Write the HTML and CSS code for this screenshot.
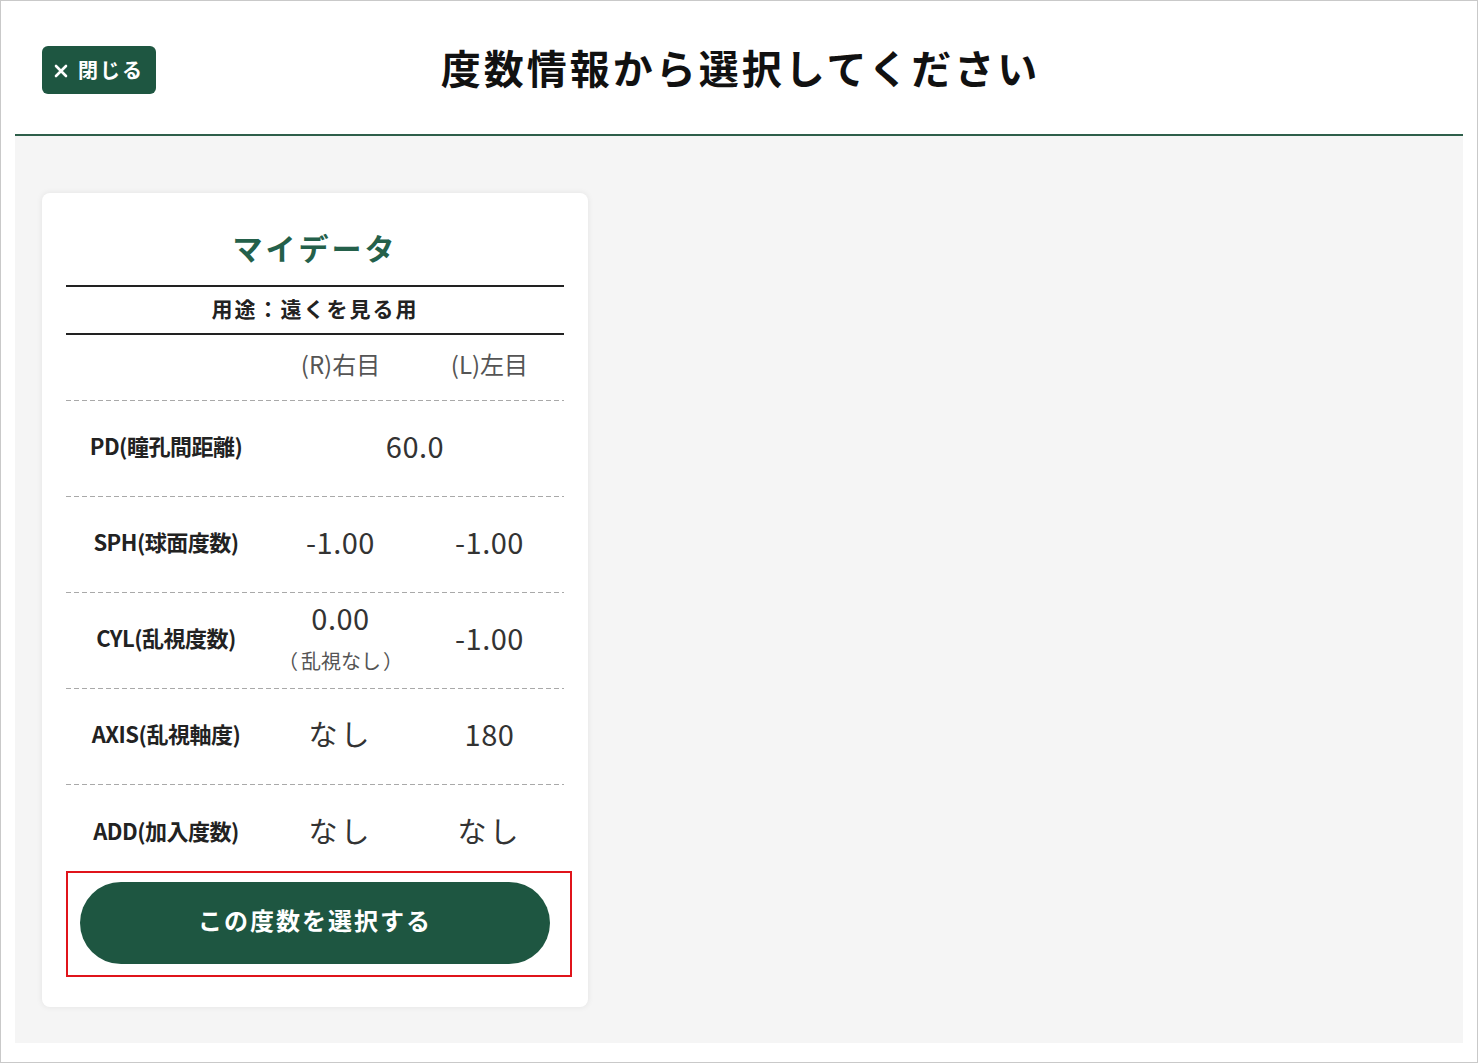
FILE: index.html
```html
<!DOCTYPE html>
<html lang="ja">
<head>
<meta charset="utf-8">
<title>度数情報から選択してください</title>
<link rel="stylesheet" href="styles.css">
</head>
<body>
<div class="frame">
  <header class="header">
    <button class="close-btn" type="button">
      <svg class="close-icon" width="14" height="14" viewBox="0 0 14 14"><path d="M2 2 L12 12 M12 2 L2 12" stroke="#fff" stroke-width="2.6" stroke-linecap="round" fill="none"/></svg>
      <span>閉じる</span>
    </button>
    <h1 class="title">度数情報から選択してください</h1>
    <div class="spacer"></div>
  </header>
  <main class="main">
    <section class="card">
      <h2 class="card-title">マイデータ</h2>
      <div class="purpose">用途：遠くを見る用</div>
      <div class="table">
        <div class="row head">
          <div class="cell label"></div>
          <div class="cell eye">(R)右目</div>
          <div class="cell eye">(L)左目</div>
        </div>
        <div class="row">
          <div class="cell label">PD(瞳孔間距離)</div>
          <div class="cell value span2">60.0</div>
        </div>
        <div class="row">
          <div class="cell label">SPH(球面度数)</div>
          <div class="cell value">-1.00</div>
          <div class="cell value">-1.00</div>
        </div>
        <div class="row">
          <div class="cell label">CYL(乱視度数)</div>
          <div class="cell value stack"><span>0.00</span><span class="note"><span class="po">（</span>乱視なし<span class="pc">）</span></span></div>
          <div class="cell value">-1.00</div>
        </div>
        <div class="row">
          <div class="cell label">AXIS(乱視軸度)</div>
          <div class="cell value jp">なし</div>
          <div class="cell value">180</div>
        </div>
        <div class="row last">
          <div class="cell label">ADD(加入度数)</div>
          <div class="cell value jp">なし</div>
          <div class="cell value jp">なし</div>
        </div>
      </div>
      <div class="select-wrap">
        <button class="select-btn" type="button">この度数を選択する</button>
      </div>
    </section>
  </main>
</div>
</body>
</html>
```
FILE: styles.css
```css
* { box-sizing: border-box; }
html, body { margin: 0; padding: 0; background: #fff; }
body {
  font-family: "Noto Sans CJK JP", "Noto Sans", sans-serif;
  color: #222;
}
.frame {
  width: 1478px;
  height: 1063px;
  border: 1px solid #c9c9c9;
  padding: 0 14px 19px;
  background: #fff;
  display: flex;
  flex-direction: column;
}
.header {
  flex: none;
  height: 135px;
  border-bottom: 2px solid #2e5f4a;
  display: grid;
  grid-template-columns: 1fr auto 1fr;
  align-items: center;
  padding-top: 5px;
}
.close-btn {
  justify-self: start;
  margin-left: 27px;
  width: 114px;
  height: 48px;
  border: none;
  border-radius: 6px;
  background: #1e5641;
  color: #fff;
  font-family: inherit;
  font-size: 20px;
  font-weight: 700;
  letter-spacing: 2px;
  display: flex;
  align-items: center;
  padding: 0 0 0 12px;
  gap: 10px;
  line-height: 1;
}
.close-icon { flex: none; margin-top: 2px; }
.title {
  margin: -6px -3px 0 0;
  font-size: 40px;
  font-weight: 700;
  letter-spacing: 3px;
  line-height: 1.2;
  color: #111;
}
.main {
  flex: 1;
  min-height: 0;
  background: #f5f5f5;
  padding: 57px 27px;
}
.card {
  width: 546px;
  background: #fff;
  border-radius: 8px;
  box-shadow: 0 0 6px rgba(0,0,0,0.08);
  padding: 34px 24px 43px;
}
.card-title {
  margin: 0 0 18px;
  text-align: center;
  font-size: 30px;
  line-height: 40px;
  font-weight: 700;
  letter-spacing: 3px;
  color: #24604a;
}
.purpose {
  border-top: 2px solid #222;
  border-bottom: 2px solid #222;
  height: 50px;
  display: flex;
  align-items: center;
  justify-content: center;
  font-size: 21px;
  font-weight: 700;
  letter-spacing: 2px;
  color: #222;
  padding-bottom: 4px;
}
.row {
  display: grid;
  grid-template-columns: 200px 1fr 1fr;
  height: 96px;
  background-image: repeating-linear-gradient(to right, #a9a9a9 0 5px, transparent 5px 8px);
  background-size: 100% 1px;
  background-position: left bottom;
  background-repeat: no-repeat;
  padding-bottom: 9px;
}
.row.head { height: 66px; padding-bottom: 10px; }
.row.last { height: 95px; background-image: none; padding-bottom: 6px; }
.cell {
  display: flex;
  align-items: center;
  justify-content: center;
}
.label {
  font-size: 22px;
  font-weight: 700;
  letter-spacing: -0.5px;
  color: #222;
}
.eye {
  font-size: 24px;
  color: #555;
}
.value {
  font-size: 29px;
  color: #333;
  letter-spacing: 0.5px;
}
.value.jp { letter-spacing: 3px; }
.span2 { grid-column: 2 / 4; }
.stack {
  flex-direction: column;
  line-height: 1.15;
}
.note {
  font-size: 20px;
  color: #555;
  margin-top: 14px;
  letter-spacing: 0;
}
.po { margin-right: 3px; }
.pc { margin-left: 2px; }
.select-wrap {
  position: relative;
  margin-top: 2px;
  padding-left: 14px;
}
.select-wrap::after {
  content: "";
  position: absolute;
  left: 0;
  top: -11px;
  width: 502px;
  height: 102px;
  border: 2px solid #e0141b;
  pointer-events: none;
}
.select-btn {
  display: block;
  width: 470px;
  height: 82px;
  border: none;
  border-radius: 41px;
  background: #1e5641;
  color: #fff;
  font-family: inherit;
  font-size: 24px;
  font-weight: 700;
  letter-spacing: 2px;
  padding: 0 0 7px;
}
```
